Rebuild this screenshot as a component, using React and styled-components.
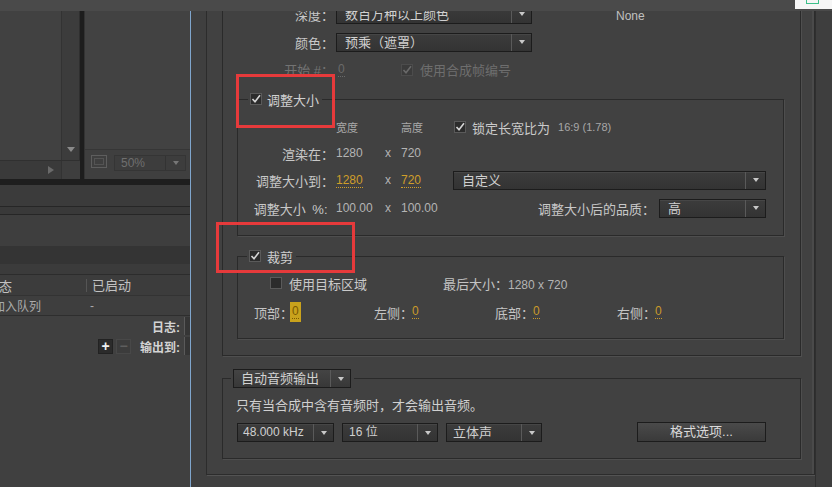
import React from "react";
import styled, { createGlobalStyle } from "styled-components";

const FONT = `"Liberation Sans", "Noto Sans CJK SC", sans-serif`;

const Global = createGlobalStyle`
  html, body { margin: 0; padding: 0; background: #414141; }
  body { font-family: ${FONT}; }
  #root { width: 832px; height: 487px; }
`;

const Root = styled.div`
  position: relative;
  width: 832px;
  height: 487px;
  overflow: hidden;
  display: flex;
  background: #414141;
  color: #c6c6c6;
  font-family: ${FONT};
  font-size: 13px;
`;

/* ---------- top band overlay ---------- */
const TopBand = styled.div`
  position: absolute;
  top: 0;
  left: 0;
  right: 0;
  height: 11px;
  background: #4a4a4a;
  z-index: 3;
  display: flex;
  justify-content: flex-end;
`;
const CornerTab = styled.div`
  width: 37px;
  height: 9px;
  background: #f6f6f6;
  display: flex;
  padding-left: 11px;
  box-sizing: border-box;
`;
const GreenSquare = styled.div`
  width: 11px;
  height: 3px;
  border: 1px solid #3cc08a;
  border-top: none;
`;

/* ---------- annotation rectangles ---------- */
const Annotation = styled.div`
  position: absolute;
  left: ${(p) => p.$x}px;
  top: ${(p) => p.$y}px;
  width: ${(p) => p.$w}px;
  height: ${(p) => p.$h}px;
  border: 3px solid #e63a3b;
  box-sizing: border-box;
  z-index: 4;
  pointer-events: none;
`;

/* ---------- left pane ---------- */
const LeftPane = styled.div`
  width: 190px;
  flex: none;
  display: flex;
  flex-direction: column;
  background: #404040;
  overflow: hidden;
`;
const Viewers = styled.div`
  display: flex;
  height: 179px;
  flex: none;
`;
const PanelA = styled.div`
  width: 80px;
  display: flex;
  flex-direction: column;
`;
const PanelAMain = styled.div`
  flex: 1;
  display: flex;
`;
const Canvas = styled.div`
  flex: 1;
  background: #414141;
`;
const VScroll = styled.div`
  width: 19px;
  box-sizing: border-box;
  background: #3c3c3c;
  border-left: 1px solid #333;
  border-right: 1px solid #2f2f2f;
  display: flex;
  flex-direction: column;
  justify-content: flex-end;
  align-items: center;
  padding-bottom: 8px;
`;
const TriDown = styled.span`
  width: 0;
  height: 0;
  border-left: ${(p) => p.$s || 4}px solid transparent;
  border-right: ${(p) => p.$s || 4}px solid transparent;
  border-top: ${(p) => (p.$s ? p.$s + 1 : 5)}px solid ${(p) => p.$c || "#c8c8c8"};
`;
const TriRight = styled.span`
  width: 0;
  height: 0;
  border-top: 4px solid transparent;
  border-bottom: 4px solid transparent;
  border-left: 6px solid #6a6a6a;
`;
const HScrollRow = styled.div`
  height: 18px;
  display: flex;
  border-top: 1px solid #303030;
`;
const HTrack = styled.div`
  flex: 1;
  background: #3a3a3a;
  display: flex;
  align-items: center;
  justify-content: flex-end;
  padding-right: 7px;
`;
const ScrollCorner = styled.div`
  width: 19px;
  background: #3e3e3e;
  border-left: 1px solid #333;
  box-sizing: border-box;
`;
const PanelSeparator = styled.div`
  width: 4px;
  background: #1d1d1d;
  border-right: 1px solid #333;
`;
const PanelB = styled.div`
  flex: 1;
  display: flex;
  flex-direction: column;
`;
const PanelBMain = styled.div`
  flex: 1;
  background: #424242;
`;
const ViewerBar = styled.div`
  height: 24px;
  border-top: 1px solid #363636;
  display: flex;
  align-items: flex-start;
  padding: 5px 0 0 6px;
  gap: 7px;
  box-sizing: content-box;
  background: #3f3f3f;
`;
const ZoomSelect = styled.div`
  width: 72px;
  height: 16px;
  box-sizing: border-box;
  border: 1px solid #353535;
  background: #3d3d3d;
  display: flex;
  font-size: 12px;
  color: #6f6f6f;
`;
const ZoomText = styled.span`
  flex: 1;
  padding-left: 6px;
  line-height: 14px;
`;
const ZoomArrow = styled.span`
  width: 19px;
  border-left: 1px solid #333;
  display: flex;
  align-items: center;
  justify-content: center;
`;
const DarkBar = styled.div`
  height: 6px;
  flex: none;
  background: #1e1e1e;
`;
const Strip = styled.div`
  height: ${(p) => p.$h}px;
  flex: none;
  background: ${(p) => p.$bg};
  border-bottom: ${(p) => (p.$line ? `1px solid ${p.$line}` : "none")};
`;
const QueueHeader = styled.div`
  height: 20px;
  flex: none;
  display: grid;
  grid-template-columns: 86px 1fr;
  align-items: center;
  background: #3c3c3c;
  border-bottom: 1px solid #333;
  font-size: 13px;
  color: #c2c2c2;
`;
const QueueRow = styled.div`
  height: 19px;
  flex: none;
  display: grid;
  grid-template-columns: 86px 1fr;
  align-items: center;
  background: #3e3e3e;
  border-bottom: 1px solid #2e2e2e;
  font-size: 12px;
  color: #aaaaaa;
`;
const Cell = styled.span`
  white-space: nowrap;
  overflow: hidden;
  padding-left: ${(p) => p.$pl || 0}px;
  border-left: ${(p) => (p.$sep ? "1px solid #555" : "none")};
  line-height: ${(p) => (p.$sep ? "13px" : "inherit")};
`;
const CutText = styled.span`
  display: inline-block;
  margin-left: ${(p) => p.$shift}px;
`;
const OutputRow = styled.div`
  height: 20px;
  flex: none;
  display: flex;
  align-items: center;
  justify-content: flex-end;
  gap: 4px;
  font-size: 12px;
  font-weight: bold;
  color: #d4d4d4;
`;
const InputStub = styled.span`
  width: 5px;
  height: 18px;
  background: #353535;
  border-left: 1px solid #5a5a5a;
`;
const MiniBtn = styled.span`
  width: 15px;
  height: 15px;
  box-sizing: border-box;
  display: inline-flex;
  align-items: center;
  justify-content: center;
  background: ${(p) => (p.$dim ? "#3c3c3c" : "#2b2b2b")};
  border: 1px solid ${(p) => (p.$dim ? "#484848" : "#222")};
  color: ${(p) => (p.$dim ? "#5e5e5e" : "#f0f0f0")};
  font-size: 14px;
  font-weight: bold;
  line-height: 1;
`;
const BtnPair = styled.span`
  display: inline-flex;
  gap: 3px;
  margin-right: 5px;
`;
const LeftRest = styled.div`
  flex: 1;
  background: #404040;
`;

/* ---------- dialog ---------- */
const DialogArea = styled.div`
  flex: 1;
  display: flex;
  align-items: flex-start;
  background: #3f3f3f;
  border-left: 1px solid #7fa5cc;
`;
const Gutter = styled.div`
  width: 15px;
  flex: none;
`;
const Frame = styled.div`
  width: 609px;
  flex: none;
  box-sizing: border-box;
  border: 1px solid #2c2c2c;
  border-top: none;
  box-shadow: 1px 1px 0 #535353, inset -2px 0 0 #4a4a4a;
  background: #414141;
  padding: 0 13px 15px 15px;
`;
const RightStrip = styled.div`
  flex: 1;
  align-self: stretch;
  background: #3e3e3e;
  border-left: 1px solid #2f2f2f;
`;
const VideoGroup = styled.div`
  border: 1px solid #2a2a2a;
  border-top: none;
  box-shadow: 1px 1px 0 #4f4f4f;
  padding-bottom: 16px;
`;
const TopGrid = styled.div`
  display: grid;
  grid-template-columns: 111px 196px 1fr;
  grid-template-rows: 28px 28px 27px;
  column-gap: 2px;
  align-items: center;
`;
const Label = styled.span`
  text-align: right;
  white-space: nowrap;
  font-size: 13px;
  color: ${(p) => (p.$dim ? "#737373" : "#c8c8c8")};
`;
const NoneText = styled.span`
  padding: 3px 0 0 82px;
  font-size: 12px;
  color: #c0c0c0;
`;
const StartCell = styled.div`
  display: flex;
  align-items: center;
`;
const StartValue = styled.span`
  width: 65px;
  padding-left: 2px;
  box-sizing: border-box;
  font-size: 12px;
  color: #6a6a6a;
`;
const Underlined = styled.span`
  border-bottom: 1px dotted currentColor;
  line-height: 13px;
  display: inline-block;
`;
const CheckLabel = styled.span`
  display: inline-flex;
  align-items: center;
  gap: ${(p) => p.$gap || 6}px;
  white-space: nowrap;
  font-size: 13px;
  color: ${(p) => (p.$dim ? "#6e6e6e" : "#cacaca")};
`;
const Box = styled.span`
  width: 12px;
  height: 12px;
  flex: none;
  box-sizing: border-box;
  display: inline-flex;
  align-items: center;
  justify-content: center;
  background: ${(p) => (p.$dim ? "#3b3b3b" : "#2c2c2c")};
  border: 1px solid ${(p) => (p.$dim ? "#4c4c4c" : "#5a5a5a")};
`;

function Checkbox({ checked, dim }) {
  return (
    <Box $dim={dim}>
      {checked && (
        <svg width="10" height="10" viewBox="0 0 10 10">
          <polyline
            points="1.5,5 4,7.8 9,1.2"
            fill="none"
            stroke={dim ? "#6a6a6a" : "#d6d6d6"}
            strokeWidth="1.6"
          />
        </svg>
      )}
    </Box>
  );
}

const Select = styled.div`
  display: flex;
  height: 19px;
  box-sizing: border-box;
  width: ${(p) => (p.$w ? `${p.$w}px` : "auto")};
  margin: ${(p) => p.$m || "0"};
  border: 1px solid #1c1c1c;
  background: linear-gradient(#3c3c3c, #333333);
  box-shadow: inset 0 1px 0 #464646;
`;
const SelectText = styled.span`
  flex: 1;
  padding-left: ${(p) => p.$pl || 8}px;
  line-height: 17px;
  font-size: ${(p) => p.$fs || 13}px;
  color: #d0d0d0;
  white-space: nowrap;
  overflow: hidden;
`;
const SelectArrow = styled.span`
  width: 19px;
  flex: none;
  border-left: 1px solid #5a5a5a;
  display: flex;
  align-items: center;
  justify-content: center;
`;

function Dropdown({ children, w, m, fs, pl }) {
  return (
    <Select $w={w} $m={m}>
      <SelectText $fs={fs} $pl={pl}>{children}</SelectText>
      <SelectArrow>
        <TriDown $s={3} />
      </SelectArrow>
    </Select>
  );
}

const Group = styled.fieldset`
  margin: ${(p) => p.$mt}px 16px 0 14px;
  padding: 0;
  min-inline-size: 0;
  border: 1px solid #2a2a2a;
  box-shadow: 1px 1px 0 #4e4e4e;
`;
const Legend = styled.legend`
  margin-left: ${(p) => p.$ml || 10}px;
  padding: 0 3px 0 2px;
  height: ${(p) => p.$h || 16}px;
`;
const LegendInner = styled.span`
  display: flex;
  align-items: center;
  height: 100%;
  gap: ${(p) => p.$gap || 5}px;
  font-size: 13px;
  color: #d0d0d0;
  white-space: nowrap;
`;
const ResizeGrid = styled.div`
  display: grid;
  grid-template-columns: 96px 48px 17px 50px 1fr;
  grid-template-rows: 26px 26px 28px 28px;
  align-items: center;
  padding: 7px 0 13px;
`;
const ColHead = styled.span`
  font-size: 11px;
  color: #a9a9a9;
  padding-left: 2px;
`;
const Num = styled.span`
  font-size: 12px;
  color: #b4b4b4;
  padding-left: ${(p) => (p.$pl === undefined ? 2 : p.$pl)}px;
  white-space: nowrap;
`;
const OrangeNum = styled(Underlined)`
  font-size: 12px;
  color: #cf9e2a;
`;
const NumCell = styled.span`
  padding-left: 2px;
`;
const LockCell = styled.div`
  display: flex;
  align-items: center;
  padding-left: 5px;
  gap: 8px;
`;
const Ratio = styled.span`
  font-size: 11px;
  color: #a8a8a8;
`;
const QualityCell = styled.div`
  display: flex;
  align-items: center;
  justify-content: flex-end;
  gap: 4px;
  padding-right: 17px;
`;
const CropBody = styled.div`
  padding: 5px 0 11px;
`;
const CropRow1 = styled.div`
  height: 28px;
  display: grid;
  grid-template-columns: 205px 1fr;
  align-items: center;
`;
const TargetCell = styled.div`
  padding-left: 32px;
`;
const FinalSize = styled.span`
  white-space: nowrap;
  font-size: 13px;
  color: #c4c4c4;
`;
const CropRow2 = styled.div`
  height: 30px;
  display: grid;
  grid-template-columns: 120px 121px 122px 1fr;
  align-items: center;
  padding-left: 16px;
`;
const EdgeCell = styled.span`
  display: flex;
  align-items: center;
  white-space: nowrap;
  font-size: 13px;
  color: #c4c4c4;
`;
const EdgeValue = styled.span`
  margin-left: -3px;
  display: inline-flex;
  align-items: center;
  height: 20px;
  padding: 0 2px;
  background: ${(p) => (p.$active ? "#c9a21c" : "transparent")};
`;
const EdgeNum = styled(Underlined)`
  font-size: 12px;
  color: ${(p) => (p.$active ? "#7a5800" : "#c99a2a")};
`;
const AudioGroup = styled.fieldset`
  margin: 13px 0 0;
  padding: 0;
  min-inline-size: 0;
  border: 1px solid #2a2a2a;
  box-shadow: 1px 1px 0 #4e4e4e;
`;
const SplitButton = styled.span`
  display: flex;
  height: 19px;
  box-sizing: border-box;
  border: 1px solid #1c1c1c;
  background: linear-gradient(#444, #383838);
`;
const SplitText = styled.span`
  width: 96px;
  padding-left: 7px;
  box-sizing: border-box;
  font-size: 13px;
  line-height: 17px;
  color: #d2d2d2;
  white-space: nowrap;
`;
const AudioBody = styled.div`
  padding: 9px 0 16px 13px;
`;
const AudioNote = styled.div`
  line-height: 18px;
  font-size: 13px;
  color: #d0d0d0;
  white-space: nowrap;
`;
const AudioRow = styled.div`
  margin-top: 8px;
  padding-left: 1px;
  display: flex;
  gap: 8px;
`;
const PushButton = styled.button`
  margin-left: 87px;
  width: 129px;
  height: 20px;
  margin-top: -1px;
  box-sizing: border-box;
  border: 1px solid #1c1c1c;
  background: linear-gradient(#4a4a4a, #3a3a3a);
  color: #dadada;
  font-family: ${FONT};
  font-size: 13px;
  padding: 0;
  line-height: 18px;
`;

export default function App() {
  return (
    <>
      <Global />
      <Root>
        <TopBand>
          <CornerTab>
            <GreenSquare />
          </CornerTab>
        </TopBand>

        <LeftPane>
          <Viewers>
            <PanelA>
              <PanelAMain>
                <Canvas />
                <VScroll>
                  <TriDown $s={4} $c="#8a8a8a" />
                </VScroll>
              </PanelAMain>
              <HScrollRow>
                <HTrack>
                  <TriRight />
                </HTrack>
                <ScrollCorner />
              </HScrollRow>
            </PanelA>
            <PanelSeparator />
            <PanelB>
              <PanelBMain />
              <ViewerBar>
                <svg width="16" height="13" viewBox="0 0 16 13">
                  <rect x="0.5" y="0.5" width="15" height="12" fill="none" stroke="#5e5e5e" />
                  <rect x="3.5" y="3.5" width="9" height="6" fill="none" stroke="#545454" />
                </svg>
                <ZoomSelect>
                  <ZoomText>50%</ZoomText>
                  <ZoomArrow>
                    <TriDown $s={3} $c="#777" />
                  </ZoomArrow>
                </ZoomSelect>
              </ViewerBar>
            </PanelB>
          </Viewers>
          <DarkBar />
          <Strip $h={21} $bg="#3b3b3b" $line="#262626" />
          <Strip $h={7} $bg="#393939" $line="#262626" />
          <Strip $h={31} $bg="#3e3e3e" />
          <Strip $h={18} $bg="#343434" />
          <Strip $h={10} $bg="#3b3b3b" $line="#2c2c2c" />
          <QueueHeader>
            <Cell>
              <CutText $shift={-14}>状态</CutText>
            </Cell>
            <Cell $sep $pl={5}>已启动</Cell>
          </QueueHeader>
          <QueueRow>
            <Cell>
              <CutText $shift={-7}>加入队列</CutText>
            </Cell>
            <Cell $pl={4}>-</Cell>
          </QueueRow>
          <OutputRow>
            日志:
            <InputStub />
          </OutputRow>
          <OutputRow>
            <BtnPair>
              <MiniBtn>+</MiniBtn>
              <MiniBtn $dim>−</MiniBtn>
            </BtnPair>
            输出到:
            <InputStub />
          </OutputRow>
          <LeftRest />
        </LeftPane>

        <DialogArea>
          <Gutter />
          <Frame>
            <VideoGroup>
              <TopGrid>
                <Label>深度：</Label>
                <Dropdown>数百万种以上颜色</Dropdown>
                <NoneText>None</NoneText>

                <Label>颜色：</Label>
                <Dropdown>预乘（遮罩）</Dropdown>
                <span />

                <Label $dim>开始 #：</Label>
                <StartCell>
                  <StartValue>
                    <Underlined>0</Underlined>
                  </StartValue>
                  <CheckLabel $dim $gap={7}>
                    <Checkbox checked dim />
                    使用合成帧编号
                  </CheckLabel>
                </StartCell>
                <span />
              </TopGrid>

              <Group $mt={8}>
                <Legend>
                  <LegendInner>
                    <Checkbox checked />
                    调整大小
                  </LegendInner>
                </Legend>
                <ResizeGrid>
                  <span />
                  <ColHead>宽度</ColHead>
                  <span />
                  <ColHead>高度</ColHead>
                  <LockCell>
                    <CheckLabel $gap={6}>
                      <Checkbox checked />
                      锁定长宽比为
                    </CheckLabel>
                    <Ratio>16:9 (1.78)</Ratio>
                  </LockCell>

                  <Label>渲染在：</Label>
                  <Num>1280</Num>
                  <Num $pl={3}>x</Num>
                  <Num>720</Num>
                  <span />

                  <Label>调整大小到：</Label>
                  <NumCell>
                    <OrangeNum>1280</OrangeNum>
                  </NumCell>
                  <Num $pl={3}>x</Num>
                  <NumCell>
                    <OrangeNum>720</OrangeNum>
                  </NumCell>
                  <Dropdown m="0 17px 0 4px">自定义</Dropdown>

                  <Label>调整大小{"\u2002"}%:{"\u2002"}</Label>
                  <Num>100.00</Num>
                  <Num $pl={3}>x</Num>
                  <Num>100.00</Num>
                  <QualityCell>
                    <Label>调整大小后的品质：</Label>
                    <Dropdown w={107}>高</Dropdown>
                  </QualityCell>
                </ResizeGrid>
              </Group>

              <Group $mt={12}>
                <Legend $ml={9}>
                  <LegendInner $gap={6}>
                    <Checkbox checked />
                    裁剪
                  </LegendInner>
                </Legend>
                <CropBody>
                  <CropRow1>
                    <TargetCell>
                      <CheckLabel $gap={7}>
                        <Checkbox />
                        使用目标区域
                      </CheckLabel>
                    </TargetCell>
                    <FinalSize>
                      最后大小：<Num $pl={0}>1280 x 720</Num>
                    </FinalSize>
                  </CropRow1>
                  <CropRow2>
                    <EdgeCell>
                      顶部：
                      <EdgeValue $active>
                        <EdgeNum $active>0</EdgeNum>
                      </EdgeValue>
                    </EdgeCell>
                    <EdgeCell>
                      左侧：
                      <EdgeValue>
                        <EdgeNum>0</EdgeNum>
                      </EdgeValue>
                    </EdgeCell>
                    <EdgeCell>
                      底部：
                      <EdgeValue>
                        <EdgeNum>0</EdgeNum>
                      </EdgeValue>
                    </EdgeCell>
                    <EdgeCell>
                      右侧：
                      <EdgeValue>
                        <EdgeNum>0</EdgeNum>
                      </EdgeValue>
                    </EdgeCell>
                  </CropRow2>
                </CropBody>
              </Group>
            </VideoGroup>

            <AudioGroup>
              <Legend $ml={8} $h={19}>
                <SplitButton>
                  <SplitText>自动音频输出</SplitText>
                  <SelectArrow>
                    <TriDown $s={3} />
                  </SelectArrow>
                </SplitButton>
              </Legend>
              <AudioBody>
                <AudioNote>只有当合成中含有音频时，才会输出音频。</AudioNote>
                <AudioRow>
                  <Dropdown w={97} fs={12} pl={5}>48.000 kHz</Dropdown>
                  <Dropdown w={96} fs={12} pl={6}>16 位</Dropdown>
                  <Dropdown w={96} pl={6}>立体声</Dropdown>
                  <PushButton>格式选项...</PushButton>
                </AudioRow>
              </AudioBody>
            </AudioGroup>
          </Frame>
          <RightStrip />
        </DialogArea>

        <Annotation $x={236} $y={74} $w={99} $h={54} />
        <Annotation $x={216} $y={222} $w={139} $h={51} />
      </Root>
    </>
  );
}
